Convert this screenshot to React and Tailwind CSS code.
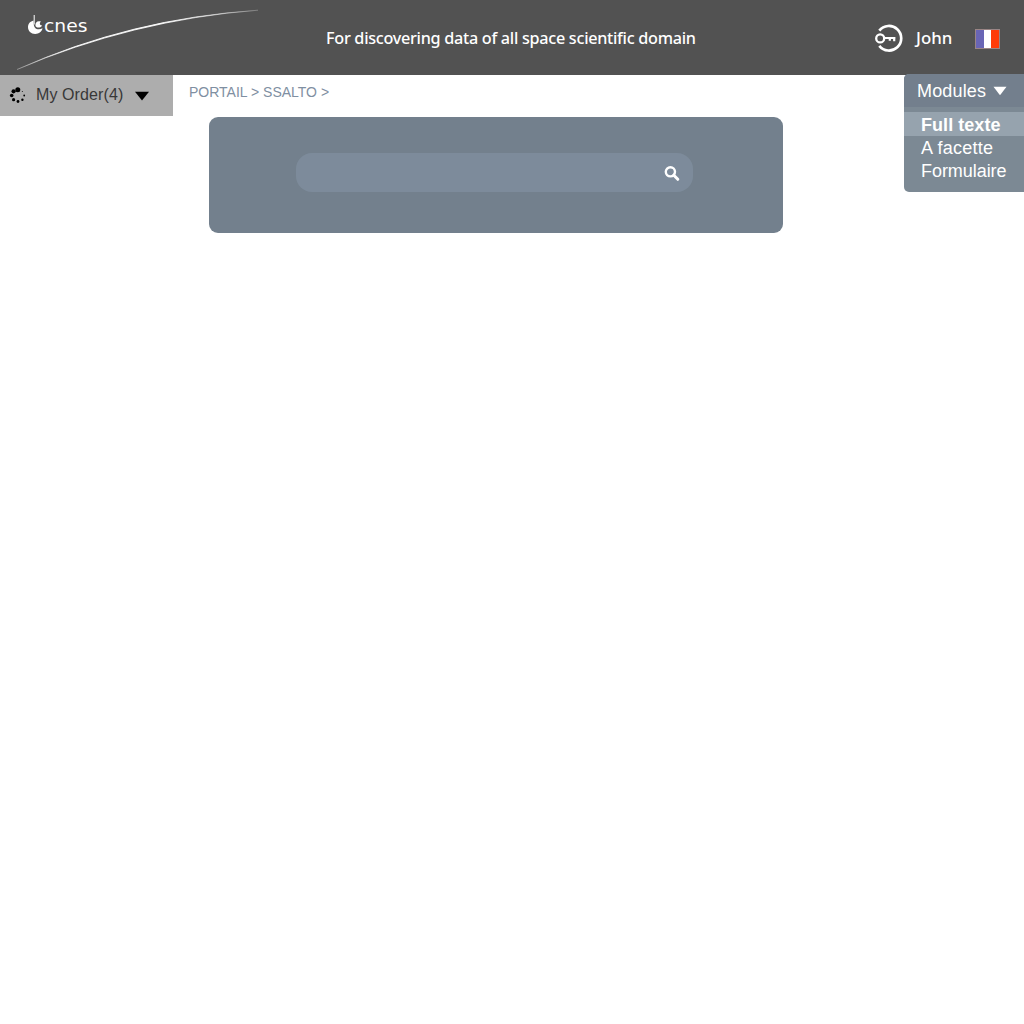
import React from "react";

function Swoosh() {
  return (
    <svg className="absolute left-0 top-0" width="270" height="75" viewBox="0 0 270 75">
      <defs>
        <linearGradient id="fade" gradientUnits="userSpaceOnUse" x1="17" y1="0" x2="258" y2="0">
          <stop offset="0" stopColor="#fff" stopOpacity="0.2" />
          <stop offset="0.25" stopColor="#fff" stopOpacity="0.9" />
          <stop offset="0.6" stopColor="#fff" stopOpacity="0.95" />
          <stop offset="1" stopColor="#fff" stopOpacity="0.15" />
        </linearGradient>
      </defs>
      <path d="M17 69.5Q131 18.5 258 10.2Q132 19.9 17 69.5Z" fill="url(#fade)" stroke="url(#fade)" strokeWidth="0.9" />
    </svg>
  );
}

function Logo() {
  return (
    <div className="relative ml-7 mt-[14px] flex h-6 w-[62px] shrink-0 self-start">
      <svg className="shrink-0" width="16" height="24" viewBox="0 0 16 24" fill="none">
        <path d="M5.6 6.4C2.2 7.2 0 9.7 0 13C0 17 3 20 7.2 20C11 20 14 17.5 14.5 14.3C12 15.8 8.5 15.6 7 13.8C5.8 12.3 5.6 10 5.6 6.4Z" fill="#fff" />
        <path d="M6.2 1V10.5" stroke="#fff" strokeWidth="1" />
        <path d="M7.4 11.5C7.2 8.2 9.5 6.3 13 7.6C11.1 9 11.7 11.6 14.2 11.4C12.4 14.2 8 14.4 7.4 11.5Z" fill="#fff" />
      </svg>
      <span className="block w-[44px] origin-left scale-x-[1.1] whitespace-nowrap font-['DejaVu_Sans',sans-serif] text-[17px] leading-6">cnes</span>
    </div>
  );
}

function KeyIcon() {
  return (
    <svg width="30" height="30" viewBox="0 0 30 30" fill="none" stroke="#fff">
      <path d="M5.3 6.6A12.3 12.3 0 1 1 5.3 21.9" strokeWidth="2.7" />
      <circle cx="6.2" cy="14.4" r="4" strokeWidth="2.3" />
      <path d="M10.3 14H21.4M15.8 14V16.8M20.2 14V17.2" strokeWidth="2.2" />
    </svg>
  );
}

function Spinner() {
  const dots = [
    [8.8, 3.7, 2.5], [4.6, 5.3, 2.1], [2.7, 9.5, 1.8], [4.6, 13.7, 1.6],
    [9, 15.5, 1.4], [13.4, 13.7, 1.2], [15.2, 9.5, 0.9], [13.3, 5.4, 0.5],
  ];
  return (
    <svg className="ml-[9px] mt-[11px] shrink-0" width="18" height="18">
      {dots.map(([x, y, r]) => <circle key={`${x}-${y}`} cx={x} cy={y} r={r} />)}
    </svg>
  );
}

function Modules() {
  return (
    <nav className="absolute -top-px right-0 h-[118px] w-[120px] overflow-hidden rounded-l-[5px] bg-[#7c8994] text-[18px] leading-[23px] text-white">
      <div className="flex h-[33px] items-center bg-[#737f8d] pl-[13px] pt-px">
        <span className="w-[76px] whitespace-nowrap tracking-[0.15px]">Modules</span>
        <svg width="14" height="10" viewBox="0 0 14 10"><path d="M.5 .8H13.5L7 9.2Z" fill="#fff" /></svg>
      </div>
      <ul className="pt-[5px]">
        <li className="h-6 bg-[#96a3ae] pl-[17px] pt-[2px] font-bold tracking-[0.05px]">Full texte</li>
        <li className="h-[23px] pl-[17px] pt-px tracking-[0.24px]">A facette</li>
        <li className="h-[23px] pl-[17px] pt-px tracking-[-0.05px]">Formulaire</li>
      </ul>
    </nav>
  );
}

export default function App() {
  return (
    <div className="min-h-screen w-[1024px] bg-white font-['Liberation_Sans',sans-serif]">
      <header className="relative flex h-[75px] bg-[#525252] text-white">
        <Swoosh />
        <Logo />
        <h1 className="ml-[236px] mt-[26px] w-[372px] origin-left scale-x-[.953] whitespace-nowrap font-['Noto_Sans',sans-serif] text-[17px] font-medium leading-6 tracking-[-0.3px]">For discovering data of all space scientific domain</h1>
        <div className="ml-[176px] mt-[24px]"><KeyIcon /></div>
        <span className="ml-[12px] mt-[26px] w-[38px] origin-left scale-x-[.99] whitespace-nowrap font-['Noto_Sans',sans-serif] text-[17px] font-medium leading-6">John</span>
        <div className="ml-[21px] mt-[29px] flex h-5 w-[25px] border border-[#9a8585]">
          <i className="flex-1 bg-[#6965b5]" /><i className="flex-1 bg-white" /><i className="flex-1 bg-[#ff3b08]" />
        </div>
      </header>
      <main className="relative flex">
        <aside className="flex h-[41px] w-[173px] shrink-0 bg-[#adadad] text-[16px] text-[#383838]">
          <Spinner />
          <span className="ml-[9px] mt-2 w-[98px] whitespace-nowrap leading-6 tracking-[0.1px]">My Order(4)</span>
          <svg className="mt-[16px]" width="16" height="11"><path d="M1 .8H15L8 9.5Z" fill="#000" /></svg>
        </aside>
        <div className="ml-4">
          <div className="mt-[8px] whitespace-nowrap text-[14px] leading-[18px] text-[#7f8fa2]">PORTAIL &gt; SSALTO &gt;</div>
          <section className="ml-5 mt-[16px] h-[116px] w-[574px] rounded-[9px] bg-[#73808d] pl-[87px] pt-9">
            <div className="flex h-[39px] w-[397px] items-center justify-end rounded-[16px] bg-[#7d8b9b] pr-[12px]">
              <svg width="18" height="18" viewBox="0 0 18 18" fill="none" stroke="#fff">
                <circle cx="7.4" cy="7.8" r="4.6" strokeWidth="2.4" />
                <path d="M10.8 11.2L14.8 15.3" strokeWidth="3" strokeLinecap="round" />
              </svg>
            </div>
          </section>
        </div>
        <Modules />
      </main>
    </div>
  );
}
